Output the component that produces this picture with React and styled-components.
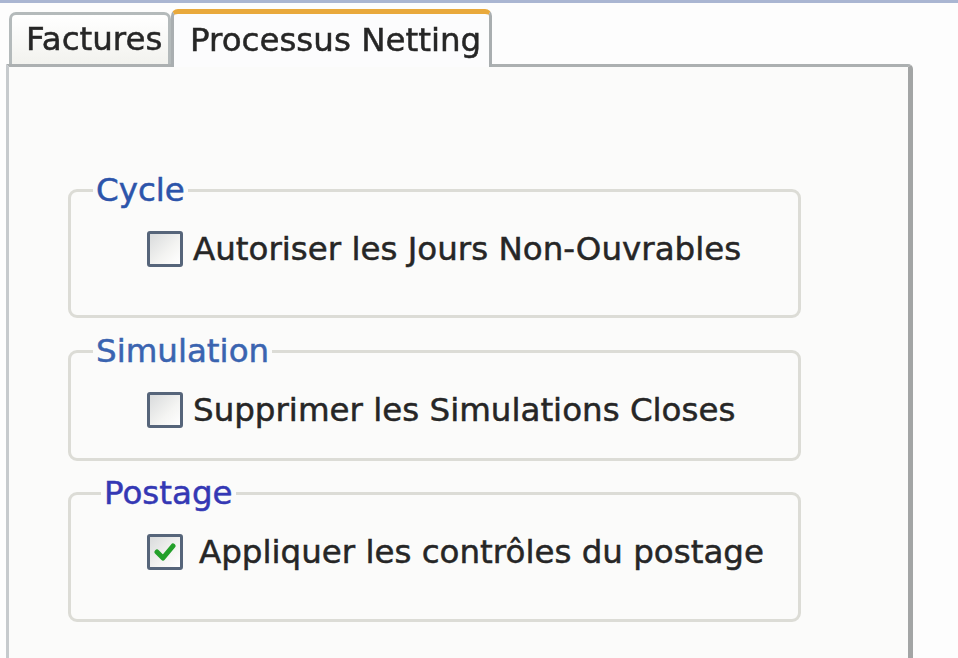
import React from 'react'
import styled, { createGlobalStyle } from 'styled-components'

const GlobalStyle = createGlobalStyle`
  html, body {
    margin: 0;
    padding: 0;
    background: #fdfdfd;
    overflow: hidden;
  }
`

const Page = styled.div`
  width: 958px;
  height: 658px;
  overflow: hidden;
  font-family: "DejaVu Sans", "Liberation Sans", sans-serif;
  font-size: 32.5px;
  color: #262626;
  -webkit-text-stroke: 0.5px currentColor;
  border-top: 3px solid #aab6d2;
  box-sizing: border-box;
  filter: blur(0.7px);
`

const TabStrip = styled.div`
  display: flex;
  align-items: flex-end;
  padding-left: 9px;
  margin-top: 6px;
  position: relative;
  z-index: 1;
`

const Tab = styled.div`
  box-sizing: border-box;
  height: ${(p) => (p.$active ? '58px' : '52px')};
  width: ${(p) => p.$width}px;
  padding-left: ${(p) => p.$pad}px;
  display: flex;
  align-items: center;
  border: 3px solid ${(p) => (p.$active ? '#a9aeb0' : '#b4babb')};
  border-top: ${(p) => (p.$active ? '5px solid #e9a93c' : '3px solid #b4babb')};
  border-bottom: none;
  border-radius: 7px 7px 0 0;
  background: ${(p) =>
    p.$active ? '#fcfcfd' : 'linear-gradient(#ffffff, #f2f2ee)'};
  margin-bottom: ${(p) => (p.$active ? '-3px' : '0')};
  line-height: 1;
`

const Panel = styled.div`
  box-sizing: border-box;
  width: 907px;
  height: 620px;
  margin-left: 6px;
  background: #fbfbfa;
  border-left: 3px solid #c6cacd;
  border-top: 3px solid #acb0b1;
  border-right: 5px solid #a3a5a5;
  border-top-right-radius: 5px;
  padding: 108px 0 0 59px;
  display: flex;
  flex-direction: column;
`

const Group = styled.fieldset`
  box-sizing: border-box;
  width: 733px;
  margin: ${(p) => p.$mt}px 0 0 0;
  padding: 25px 0 ${(p) => p.$pb}px 0;
  border: 3px solid #dcdcd6;
  border-radius: 9px;
`

const Legend = styled.legend`
  margin-left: ${(p) => p.$ml}px;
  padding: 0 3px;
  color: ${(p) => p.$color};
  line-height: 30px;
`

const Row = styled.label`
  display: flex;
  align-items: center;
  gap: ${(p) => p.$gap}px;
  height: 38px;
  margin-left: 76px;
`

const Box = styled.span`
  box-sizing: border-box;
  width: 36px;
  height: 36px;
  border: 3px solid #56657a;
  border-radius: 3px;
  background: linear-gradient(135deg, #d9dbdc 0%, #f4f4f2 60%, #ffffff 100%);
  display: flex;
  align-items: center;
  justify-content: center;
`

const Checkbox = ({ checked }) => (
  <Box>
    {checked && (
      <svg width="22" height="20" viewBox="0 0 22 20">
        <polyline
          points="3,10 9,16 19,4"
          fill="none"
          stroke="#23a02a"
          strokeWidth="5"
          strokeLinecap="round"
          strokeLinejoin="round"
        />
      </svg>
    )}
  </Box>
)

const groups = [
  { title: 'Cycle', label: 'Autoriser les Jours Non-Ouvrables', mt: 0, pb: 47, ml: 22, color: '#2c54aa', gap: 10 },
  { title: 'Simulation', label: 'Supprimer les Simulations Closes', mt: 18, pb: 29, ml: 22, color: '#3a64b0', gap: 10 },
  { title: 'Postage', label: 'Appliquer les contrôles du postage', mt: 17, pb: 48, ml: 30, color: '#3438b4', gap: 16, checked: true },
]

const App = () => (
  <Page>
    <GlobalStyle />
    <TabStrip>
      <Tab $width={162} $pad={14}>Factures</Tab>
      <Tab $active $width={321} $pad={16}>Processus Netting</Tab>
    </TabStrip>
    <Panel>
      {groups.map((g) => (
        <Group key={g.title} $mt={g.mt} $pb={g.pb}>
          <Legend $ml={g.ml} $color={g.color}>{g.title}</Legend>
          <Row $gap={g.gap}>
            <Checkbox checked={g.checked} />
            {g.label}
          </Row>
        </Group>
      ))}
    </Panel>
  </Page>
)

export default App
